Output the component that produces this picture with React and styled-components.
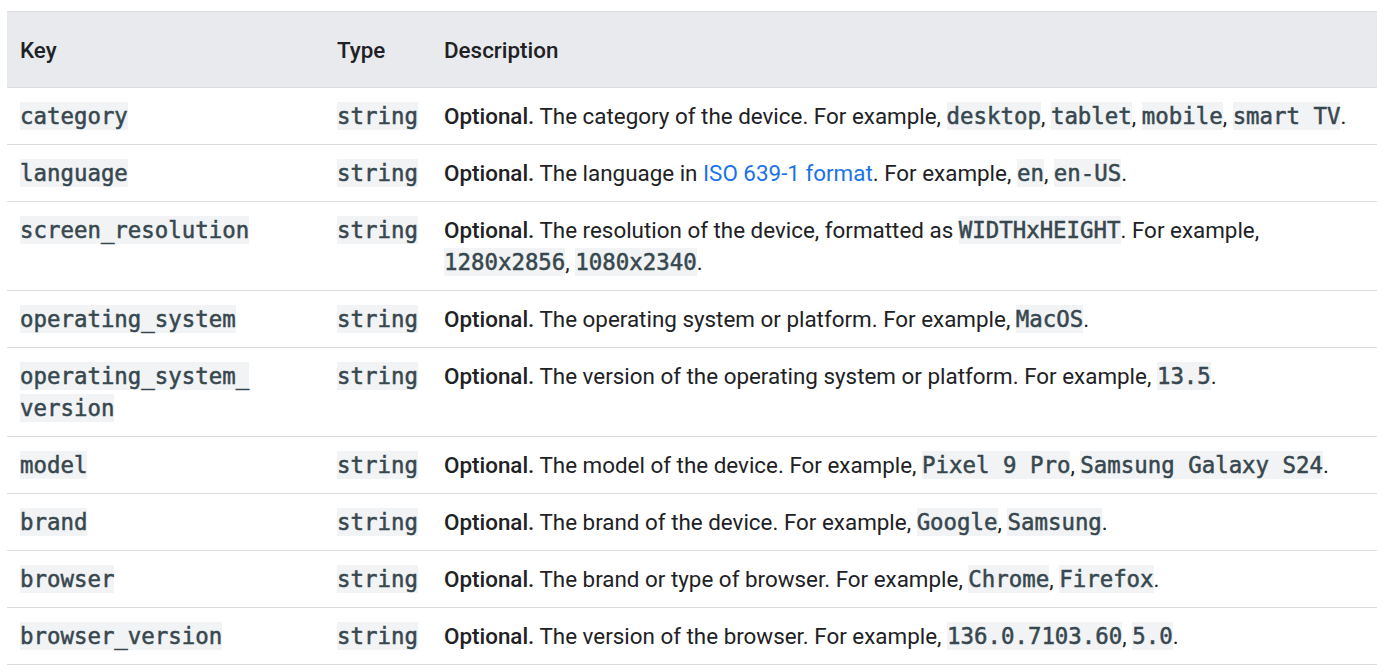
import React from 'react';
import styled, { createGlobalStyle } from 'styled-components';

const GlobalStyle = createGlobalStyle`
    body {
        margin: 0;
        background: #ffffff;
        font-family: Roboto, 'Noto Sans', sans-serif;
        color: #202124;
    }
`;

const Page = styled.div`
    padding: 11px 9px 0 7px;
`;

const Table = styled.div`
    display: flex;
    flex-direction: column;
    border-top: 1px solid #dadce0;
`;

const Row = styled.div`
    display: grid;
    grid-template-columns: 317px 107px 1fr;
    border-bottom: 1px solid #dadce0;
    background: ${(p) => (p.$head ? '#e8eaed' : '#ffffff')};
`;

const Cell = styled.div`
    padding: ${(p) => (p.$head ? '22px 13px 21px' : '12px 13px')};
    font-size: 22.4px;
    line-height: 32px;
    font-weight: ${(p) => (p.$head ? 500 : 400)};
    color: #202124;
`;

const Code = styled.code`
    font-family: 'DejaVu Sans Mono', 'Liberation Mono', monospace;
    font-size: 22.4px;
    line-height: 1;
    color: #37474f;
    background: #f1f3f4;
    padding: 1px 0;
    -webkit-text-stroke: 0.5px #37474f;
`;

const Strong = styled.b`
    font-weight: 500;
`;

const Link = styled.a`
    color: #1a73e8;
    text-decoration: none;
`;

// join code samples with ", "
const Examples = ({ items }) => (
    <>
        {items.map((it, i) => (
            <React.Fragment key={it}>
                {i > 0 && ', '}
                <Code>{it}</Code>
            </React.Fragment>
        ))}
        .
    </>
);

const rows = [
    {
        key: 'category',
        desc: (
            <>
                <Strong>Optional.</Strong> The category of the device. For example,{' '}
                <Examples items={['desktop', 'tablet', 'mobile', 'smart TV']} />
            </>
        ),
    },
    {
        key: 'language',
        desc: (
            <>
                <Strong>Optional.</Strong> The language in <Link href="#">ISO 639-1 format</Link>. For example,{' '}
                <Examples items={['en', 'en-US']} />
            </>
        ),
    },
    {
        key: 'screen_resolution',
        desc: (
            <>
                <Strong>Optional.</Strong> The resolution of the device, formatted as <Code>WIDTHxHEIGHT</Code>. For example,{' '}
                <Examples items={['1280x2856', '1080x2340']} />
            </>
        ),
    },
    {
        key: 'operating_system',
        desc: (
            <>
                <Strong>Optional.</Strong> The operating system or platform. For example, <Examples items={['MacOS']} />
            </>
        ),
    },
    {
        key: (
            <>
                operating_system_<wbr />version
            </>
        ),
        id: 'operating_system_version',
        desc: (
            <>
                <Strong>Optional.</Strong> The version of the operating system or platform. For example,{' '}
                <Examples items={['13.5']} />
            </>
        ),
    },
    {
        key: 'model',
        desc: (
            <>
                <Strong>Optional.</Strong> The model of the device. For example,{' '}
                <Examples items={['Pixel 9 Pro', 'Samsung Galaxy S24']} />
            </>
        ),
    },
    {
        key: 'brand',
        desc: (
            <>
                <Strong>Optional.</Strong> The brand of the device. For example, <Examples items={['Google', 'Samsung']} />
            </>
        ),
    },
    {
        key: 'browser',
        desc: (
            <>
                <Strong>Optional.</Strong> The brand or type of browser. For example,{' '}
                <Examples items={['Chrome', 'Firefox']} />
            </>
        ),
    },
    {
        key: 'browser_version',
        desc: (
            <>
                <Strong>Optional.</Strong> The version of the browser. For example,{' '}
                <Examples items={['136.0.7103.60', '5.0']} />
            </>
        ),
    },
];

export default function App() {
    return (
        <Page>
            <GlobalStyle />
            <Table>
                <Row $head>
                    <Cell $head>Key</Cell>
                    <Cell $head>Type</Cell>
                    <Cell $head>Description</Cell>
                </Row>
                {rows.map((r) => (
                    <Row key={r.id || r.key}>
                        <Cell>
                            <Code>{r.key}</Code>
                        </Cell>
                        <Cell>
                            <Code>string</Code>
                        </Cell>
                        <Cell>{r.desc}</Cell>
                    </Row>
                ))}
            </Table>
        </Page>
    );
}
